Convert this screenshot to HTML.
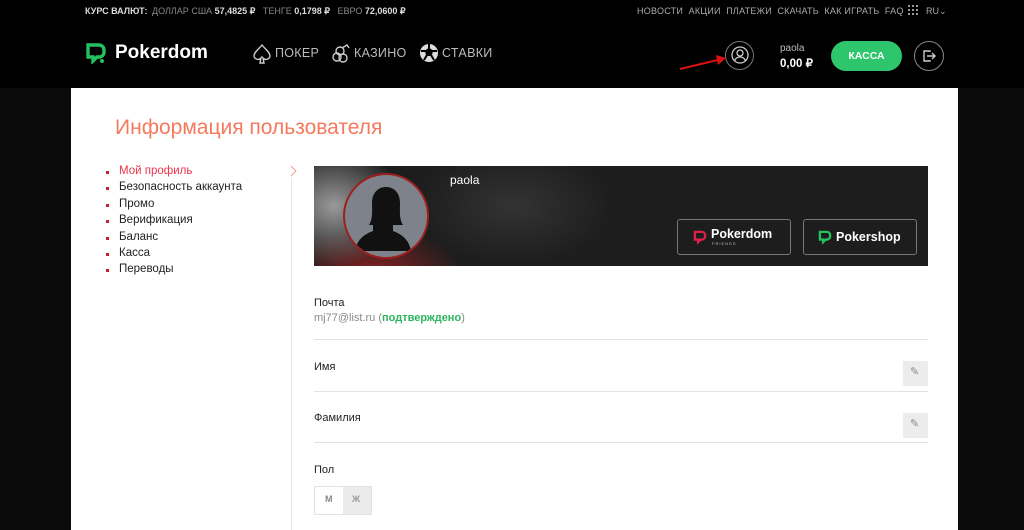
<!DOCTYPE html>
<html><head><meta charset="utf-8"><style>
*{margin:0;padding:0;box-sizing:border-box}
body{width:1024px;height:530px;overflow:hidden;background:#0b0b0b;font-family:"Liberation Sans",sans-serif;position:relative}
.hdr{position:absolute;left:0;top:0;width:1024px;height:88px;background:#000}
.t{position:absolute;font-size:9px;color:#888;white-space:nowrap}
.t b{color:#ddd}
.nav{position:absolute;top:46px;font-size:12.5px;color:#bbb;letter-spacing:.3px}
.panel{position:absolute;left:71px;top:88px;width:887px;height:442px;background:#fff}
.abs{position:absolute}
.menu div{font-size:11.5px;color:#222;height:16.4px;position:relative;padding-left:13px}
.menu div:before{content:"";position:absolute;left:0;top:6px;width:3px;height:3px;background:#c0203a}
.lbl{position:absolute;left:314px;font-size:11px;color:#222}
.line{position:absolute;left:314px;width:614px;height:1px;background:#e2e2e2}
.pen{position:absolute;left:903px;width:25px;height:25px;background:#ececec}
</style></head><body>
<div class="hdr">
<div class="t" style="left:85px;top:6px;color:#ddd;font-weight:bold">КУРС ВАЛЮТ:</div>
<div class="t" style="left:152px;top:6px">ДОЛЛАР США <b>57,4825 ₽</b> &nbsp; ТЕНГЕ <b>0,1798 ₽</b> &nbsp; ЕВРО <b>72,0600 ₽</b></div>
<div class="t" style="left:637px;top:6px;font-size:9px;color:#aaa;letter-spacing:0.25px">НОВОСТИ &nbsp;АКЦИИ &nbsp;ПЛАТЕЖИ &nbsp;СКАЧАТЬ &nbsp;КАК ИГРАТЬ &nbsp;FAQ</div>
<div class="abs" style="left:908px;top:5px;width:10px;height:10px;background:repeating-linear-gradient(90deg,#999 0 2px,#000 2px 4px)"></div>
<div class="abs" style="left:908px;top:5px;width:10px;height:10px;background:repeating-linear-gradient(0deg,transparent 0 2px,#000 2px 4px)"></div>
<div class="t" style="left:926px;top:6px;color:#aaa">RU⌄</div>
<svg class="abs" style="left:85px;top:42px" width="22" height="22" viewBox="0 0 22 22"><path d="M3 3h11a5 5 0 0 1 5 5v2a5 5 0 0 1-5 5h-2l-4 4v-4H3z" fill="none" stroke="#22c35e" stroke-width="3.4"/><circle cx="17" cy="19" r="2" fill="#22c35e"/></svg>
<div class="abs" style="left:115px;top:42px;font-size:19px;font-weight:bold;color:#fff">Pokerdom</div>
<svg class="abs" style="left:253px;top:44px" width="18" height="20" viewBox="0 0 18 20"><path d="M9 1C6 5 1 8 1 12a4 4 0 0 0 7 2l-1 5h4l-1-5a4 4 0 0 0 7-2c0-4-5-7-8-11z" fill="none" stroke="#ccc" stroke-width="1.4"/></svg>
<div class="nav" style="left:275px">ПОКЕР</div>
<svg class="abs" style="left:331px;top:43px" width="20" height="20" viewBox="0 0 20 20" fill="none" stroke="#ccc" stroke-width="1.4"><circle cx="6" cy="14" r="4"/><circle cx="12" cy="15" r="4"/><circle cx="9" cy="8" r="4"/><path d="M11 5l5-3 2 3"/></svg>
<div class="nav" style="left:354px">КАЗИНО</div>
<svg class="abs" style="left:419px;top:43px" width="20" height="20" viewBox="0 0 20 20"><circle cx="10" cy="10" r="9" fill="#ddd"/><path d="M10 6l3 2-1 4h-4l-1-4zM10 1v5M2 8l5 0M18 8h-5M5 17l3-5M15 17l-3-5" stroke="#000" stroke-width="2" fill="#000"/></svg>
<div class="nav" style="left:442px">СТАВКИ</div>
<div class="abs" style="left:725px;top:41px;width:29px;height:29px;border:1.5px solid #777;border-radius:50%"></div>
<svg class="abs" style="left:731px;top:46px" width="18" height="19" viewBox="0 0 18 19" fill="none" stroke="#ccc" stroke-width="1.3"><circle cx="9" cy="9" r="8"/><circle cx="9" cy="7" r="3"/><path d="M3.5 15c1-3 3-4 5.5-4s4.5 1 5.5 4"/></svg>
<svg class="abs" style="left:678px;top:54px" width="50" height="18"><path d="M2 15L44 5" stroke="#d11" stroke-width="2"/><path d="M38 1l10 3-8 7z" fill="#d11"/></svg>
<div class="abs" style="left:780px;top:43px;font-size:10px;color:#bbb">paola</div>
<div class="abs" style="left:780px;top:56px;font-size:11.5px;color:#fff;font-weight:bold">0,00 ₽</div>
<div class="abs" style="left:831px;top:41px;width:71px;height:30px;border-radius:15px;background:#2ec66d;color:#fff;font-size:10.5px;font-weight:bold;text-align:center;line-height:30px">КАССА</div>
<div class="abs" style="left:914px;top:41px;width:30px;height:30px;border:1.3px solid #888;border-radius:50%"></div>
<svg class="abs" style="left:922px;top:49px" width="14" height="14" fill="none" stroke="#ccc" stroke-width="1.4"><path d="M8 3V2H2v10h6v-1M5 7h8M10 4l3 3-3 3"/></svg>
</div>
<div class="panel"></div>
<div class="abs" style="left:115px;top:116px;font-size:21px;color:#f47a5e">Информация пользователя</div>
<div class="menu abs" style="left:106px;top:165px">
<div style="color:#e8344a">Мой профиль</div><div>Безопасность аккаунта</div><div>Промо</div><div>Верификация</div><div>Баланс</div><div>Касса</div><div>Переводы</div></div>
<div class="abs" style="left:291px;top:178px;width:1px;height:352px;background:#e6e6e6"></div>
<svg class="abs" style="left:290px;top:165px" width="8" height="12"><path d="M1 1l5 5-5 5" fill="none" stroke="#f0a090" stroke-width="1"/></svg>
<div class="abs" style="left:314px;top:166px;width:614px;height:100px;background:radial-gradient(ellipse 70px 60px at 20px 40px,#9a9a9a,transparent),radial-gradient(ellipse 90px 50px at 60px 110px,#8a2222,transparent),radial-gradient(ellipse 100px 60px at 200px 40px,#333,transparent),#1d1d1d"></div>
<div class="abs" style="left:343px;top:173px;width:86px;height:86px;border-radius:50%;border:2px solid #9c1f1f;background:#7e828a;overflow:hidden">
<svg width="82" height="82" viewBox="0 0 82 82"><path d="M24 50c4-6 3-14 3-22 0-10 6-16 14-16s14 6 14 16c0 8-1 16 3 22h-10v6c8 3 16 8 18 20H10c2-12 10-17 18-20v-6z" fill="#111"/></svg></div>
<div class="abs" style="left:450px;top:173px;font-size:12px;color:#fff">paola</div>
<div class="abs" style="left:677px;top:219px;width:114px;height:36px;border:1px solid #777;border-radius:3px"></div>
<svg class="abs" style="left:693px;top:229px" width="14" height="16" viewBox="0 0 22 22"><path d="M3 3h11a5 5 0 0 1 5 5v2a5 5 0 0 1-5 5h-2l-4 4v-4H3z" fill="none" stroke="#e0204a" stroke-width="3.6"/></svg>
<div class="abs" style="left:711px;top:227px;font-size:12.5px;font-weight:bold;color:#fff">Pokerdom</div>
<div class="abs" style="left:712px;top:241px;font-size:4px;color:#bbb;letter-spacing:1px">FRIENDS</div>
<div class="abs" style="left:803px;top:219px;width:114px;height:36px;border:1px solid #777;border-radius:3px"></div>
<svg class="abs" style="left:818px;top:229px" width="14" height="16" viewBox="0 0 22 22"><path d="M3 3h11a5 5 0 0 1 5 5v2a5 5 0 0 1-5 5h-2l-4 4v-4H3z" fill="none" stroke="#22c35e" stroke-width="3.6"/></svg>
<div class="abs" style="left:836px;top:230px;font-size:12.5px;font-weight:bold;color:#fff">Pokershop</div>
<div class="lbl" style="top:297px">Почта</div>
<div class="lbl" style="top:312px;color:#888">mj77@list.ru (<b style="color:#2bb55f">подтверждено</b>)</div>
<div class="line" style="top:339px"></div>
<div class="lbl" style="top:361px">Имя</div>
<div class="pen" style="top:361px"></div><div class="abs" style="left:910px;top:365px;color:#888;font-size:11px">✎</div>
<div class="line" style="top:391px"></div>
<div class="lbl" style="top:412px">Фамилия</div>
<div class="pen" style="top:413px"></div><div class="abs" style="left:910px;top:417px;color:#888;font-size:11px">✎</div>
<div class="line" style="top:442px"></div>
<div class="lbl" style="top:464px">Пол</div>
<div class="abs" style="left:314px;top:486px;width:58px;height:29px;border:1px solid #e2e2e2;background:#fff"></div>
<div class="abs" style="left:343px;top:487px;width:28px;height:27px;background:#ebebeb"></div>
<div class="abs" style="left:325px;top:494px;font-size:9px;color:#888;font-weight:bold">М</div>
<div class="abs" style="left:352px;top:494px;font-size:9px;color:#999;font-weight:bold">Ж</div>
</body></html>
